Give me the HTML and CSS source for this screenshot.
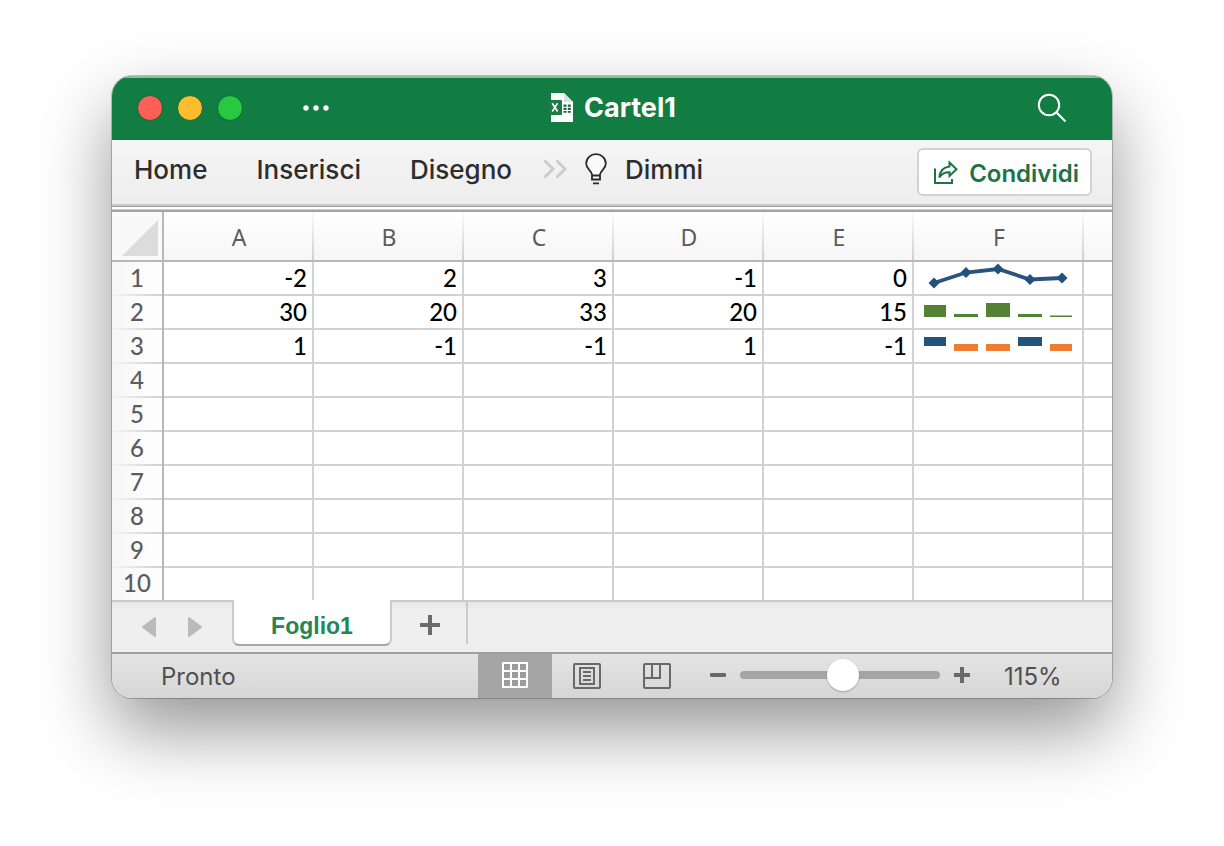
FILE: index.html
```html
<!DOCTYPE html>
<html lang="it">
<head>
<meta charset="utf-8">
<meta name="viewport" content="width=device-width, initial-scale=1">
<title>Cartel1</title>
<link rel="stylesheet" href="styles.css">
</head>
<body>
<main class="window">
  <header class="titlebar">
    <div class="titlebar-left">
      <div class="lights">
        <button class="light light-close" aria-label="Chiudi"></button>
        <button class="light light-min" aria-label="Riduci"></button>
        <button class="light light-max" aria-label="Ingrandisci"></button>
      </div>
      <button class="plain" aria-label="Altro">
        <svg width="26" height="6" viewBox="0 0 26 6" fill="#fff"><circle cx="3" cy="3" r="2.7"/><circle cx="13" cy="3" r="2.7"/><circle cx="23" cy="3" r="2.7"/></svg>
      </button>
    </div>
    <h1 class="title">
      <svg width="26" height="30" viewBox="0 0 26 30">
        <path d="M3 0H16L25 9V29H3Z" fill="#fff"/>
        <path d="M16 0V9H25Z" fill="#d6e2da"/>
        <path d="M15.500 11.500h3v2.200h-3zM19.800 11.500h3v2.200h-3zM15.500 14.800h3V17h-3zM19.800 14.800h3V17h-3zM15.500 18h3v1.800h-3zM19.800 18h3v1.800h-3z" fill="#17663a"/>
        <rect y="7" width="14" height="15" rx="1" fill="#1d7b45"/>
        <path d="M4.200 10.300 9.600 18.500M9.600 10.300 4.200 18.500" stroke="#fff" stroke-width="1.600"/>
      </svg>
      <span>Cartel1</span>
    </h1>
    <button class="plain search" aria-label="Cerca">
      <svg width="30" height="30" viewBox="0 0 30 30" fill="none" stroke="#fff" stroke-width="2"><circle cx="12" cy="12" r="10.200"/><path d="M19.300 19.300 28.500 28.500"/></svg>
    </button>
  </header>

  <nav class="ribbon" aria-label="Barra multifunzione">
    <button class="plain menu">Home</button>
    <button class="plain menu">Inserisci</button>
    <button class="plain menu">Disegno</button>
    <button class="plain more" aria-label="Altre schede">
      <svg width="24" height="20" viewBox="0 0 24 20" fill="none" stroke="#cbcbcb" stroke-width="2.800"><path d="M1.500 1.500 10 10 1.500 18.500M13.500 1.500 22 10 13.500 18.500"/></svg>
    </button>
    <button class="plain menu tell">
      <svg width="22" height="32" viewBox="0 0 22 32" fill="none" stroke="#2b2b2b" stroke-width="1.800"><path fill="#fafafa" d="M7 21.500C6.500 17.500 1.200 16 1.200 10.700C1.200 5.200 5.600 1.200 11 1.200S20.800 5.200 20.800 10.700C20.800 16 15.500 17.500 15 21.500V26.500H7Z"/><path d="M7 22.500H15M8 30.300H14"/></svg>
      <span>Dimmi</span>
    </button>
    <button class="share">
      <svg width="26" height="26" viewBox="0 0 26 26" fill="none" stroke="#1f7245" stroke-width="2"><path d="M2 8.500V23H19V19"/><path d="M16.500 2.500 23.500 9.200 16.500 16V12.200C11.500 12 8.500 13.800 6.300 17.600C6.800 11 10.300 7 16.500 6.400Z"/></svg>
      <span>Condividi</span>
    </button>
  </nav>

  <table class="sheet">
    <colgroup><col class="c-row"><col class="c-std"><col class="c-std"><col class="c-std"><col class="c-std"><col class="c-std"><col class="c-wide"><col></colgroup>
    <thead>
      <tr><th class="corner"><svg width="36" height="36" viewBox="0 0 36 36"><path d="M36 0V36H0Z" fill="#dcdcdc"/></svg></th><th>A</th><th>B</th><th>C</th><th>D</th><th>E</th><th>F</th><th></th></tr>
    </thead>
    <tbody>
      <tr><th>1</th><td>-2</td><td>2</td><td>3</td><td>-1</td><td>0</td>
        <td class="spark"><svg width="168" height="32" viewBox="0 0 168 32"><path d="M20 21 52 10.500 84 7 116 17.500 148 16" fill="none" stroke="#28547d" stroke-width="3.800"/><path d="M20 15.500l5.500 5.500-5.500 5.500-5.500-5.500zM52 5l5.500 5.500-5.500 5.500-5.500-5.500zM84 1.500l5.500 5.500-5.500 5.500-5.500-5.500zM116 12l5.500 5.500-5.500 5.500-5.500-5.500zM148 10.500l5.500 5.500-5.500 5.500-5.500-5.500z" fill="#22527c"/></svg></td><td></td></tr>
      <tr><th>2</th><td>30</td><td>20</td><td>33</td><td>20</td><td>15</td>
        <td class="spark"><svg width="168" height="32" viewBox="0 0 168 32" fill="#548235"><path d="M10 9h22v12H10zM40 18h24v3H40zM72 7h24v14H72zM104 18h24v3h-24zM136 19.500h22v1.500h-22z"/></svg></td><td></td></tr>
      <tr><th>3</th><td>1</td><td>-1</td><td>-1</td><td>1</td><td>-1</td>
        <td class="spark"><svg width="168" height="32" viewBox="0 0 168 32"><path d="M10 7h22v9H10zM104 7h24v9h-24z" fill="#23527b"/><path d="M40 14h24v7H40zM72 14h24v7H72zM136 14h22v7h-22z" fill="#ed7d31"/></svg></td><td></td></tr>
      <tr><th>4</th><td></td><td></td><td></td><td></td><td></td><td></td><td></td></tr>
      <tr><th>5</th><td></td><td></td><td></td><td></td><td></td><td></td><td></td></tr>
      <tr><th>6</th><td></td><td></td><td></td><td></td><td></td><td></td><td></td></tr>
      <tr><th>7</th><td></td><td></td><td></td><td></td><td></td><td></td><td></td></tr>
      <tr><th>8</th><td></td><td></td><td></td><td></td><td></td><td></td><td></td></tr>
      <tr><th>9</th><td></td><td></td><td></td><td></td><td></td><td></td><td></td></tr>
      <tr><th>10</th><td></td><td></td><td></td><td></td><td></td><td></td><td></td></tr>
    </tbody>
  </table>

  <div class="tabs">
    <div class="arrows">
      <button class="plain" aria-label="Foglio precedente"><svg width="16" height="22" viewBox="0 0 16 22"><path d="M14 2V20L2 11Z" fill="#bababa" stroke="#bababa" stroke-width="2" stroke-linejoin="round"/></svg></button>
      <button class="plain" aria-label="Foglio successivo"><svg width="16" height="22" viewBox="0 0 16 22"><path d="M2 2V20L14 11Z" fill="#bababa" stroke="#bababa" stroke-width="2" stroke-linejoin="round"/></svg></button>
    </div>
    <button class="tab">Foglio1</button>
    <button class="plain add" aria-label="Aggiungi foglio"><svg width="20" height="20" viewBox="0 0 20 20"><path d="M8 0h4v8h8v4h-8v8H8v-8H0V8h8z" fill="#6b6b6b"/></svg></button>
  </div>

  <footer class="status">
    <span class="ready">Pronto</span>
    <button class="plain view view-on" aria-label="Normale"><svg width="26" height="28" viewBox="0 0 26 28"><rect x="1" y="2" width="24" height="24" fill="#9c9c9c"/><path d="M1 1H25V25H1ZM9 1V25M17 1V25M1 9H25M1 17H25" fill="none" stroke="#fff" stroke-width="2" stroke-linejoin="round"/></svg></button>
    <button class="plain view" aria-label="Layout di pagina"><svg width="28" height="26" viewBox="0 0 28 26" fill="none" stroke="#696969" stroke-width="2"><rect x="1" y="1" width="26" height="24" rx="1"/><path d="M7 5H21V21H7ZM10 9H18M10 13H18M10 17H18"/></svg></button>
    <button class="plain view" aria-label="Anteprima interruzioni di pagina"><svg width="28" height="26" viewBox="0 0 28 26" fill="none" stroke="#696969" stroke-width="2"><rect x="1" y="1" width="26" height="24" rx="1"/><path d="M1 15H17V1M9 1V15"/></svg></button>
    <div class="zoom">
      <button class="plain" aria-label="Riduci zoom"><svg width="16" height="16" viewBox="0 0 16 16"><rect y="6" width="16" height="4" rx="1" fill="#696969"/></svg></button>
      <input class="slider" type="range" min="0" max="100" value="52" aria-label="Zoom">
      <button class="plain" aria-label="Aumenta zoom"><svg width="16" height="16" viewBox="0 0 16 16"><path d="M6 0h4v6h6v4h-6v6H6v-6H0V6h6z" fill="#696969"/></svg></button>
    </div>
    <span class="percent">115%</span>
  </footer>
</main>
</body>
</html>
```
FILE: styles.css
```css
* { box-sizing: border-box; }

body {
  margin: 0;
  padding: 76px 112px 148px;
  background: #fff;
  font-family: Inter, "Liberation Sans", sans-serif;
}

svg { display: block; flex: none; }

button { font: inherit; color: inherit; cursor: pointer; }

.plain {
  display: flex;
  align-items: center;
  padding: 0;
  border: 0;
  background: none;
}

.window {
  overflow: hidden;
  border-radius: 20px;
  background: #fff;
  box-shadow: 0 0 0 1px rgba(0, 0, 0, .22), 0 32px 72px rgba(0, 0, 0, .42);
}

.titlebar {
  display: grid;
  grid-template-columns: 1fr auto 1fr;
  align-items: center;
  height: 64px;
  padding: 0 25px 2px;
  border-top: 2px solid #8fbaa1;
  background: #117d43;
}

.titlebar-left { display: flex; align-items: center; gap: 60px; }

.lights { display: flex; gap: 14px; }

.light {
  width: 26px;
  height: 26px;
  padding: 0;
  border: 1px solid #0d6937;
  border-radius: 50%;
}

.light-close { background: #ff5f57; }
.light-min { background: #febc2e; }
.light-max { background: #28c840; }

.title {
  display: flex;
  align-items: center;
  gap: 10px;
  margin: 0;
  color: #fff;
  font-size: 27px;
  font-weight: 700;
  line-height: 32px;
}

.search { justify-self: end; margin-right: 20px; }

.ribbon {
  display: flex;
  align-items: flex-start;
  height: 72px;
  padding: 8px 20px 0 22px;
  border-bottom: 2px solid #a4a4a4;
  background: linear-gradient(#f5f5f5, #ededed 64px, #c8c8c8 64px, #c8c8c8 66px, #9c9c9c 66px, #9c9c9c 67px, #fff 67px, #fff 69px, #ccc 69px);
  color: #2d2d2d;
}

.menu {
  height: 42px;
  margin-right: 49px;
  font-size: 26px;
  font-weight: 500;
}

.more { height: 42px; margin: 0 18px 0 -18px; }

.tell { gap: 18px; margin-right: 0; }

.share {
  display: flex;
  align-items: center;
  gap: 10px;
  height: 48px;
  margin-left: auto;
  padding: 2px 11px 0 14px;
  border: 2px solid #d2d2d2;
  border-radius: 6px;
  background: #fff;
  color: #1f7245;
  font-size: 24px;
  font-weight: 600;
}

.sheet {
  width: 100%;
  table-layout: fixed;
  border-collapse: separate;
  border-spacing: 0;
  font-family: Lato, "Noto Sans", sans-serif;
  font-size: 24px;
  line-height: 28px;
}

.c-row { width: 52px; }
.c-std { width: 150px; }
.c-wide { width: 170px; }

.sheet th {
  padding: 0 0 2px;
  color: #5c5c5c;
  font-weight: 500;
}

.sheet thead th {
  height: 50px;
  padding: 2px 0 0;
  border-bottom: 2px solid #b8b8b8;
  background: linear-gradient(#fbfbfb, #cfcfcf) right / 2px 100% no-repeat, linear-gradient(#fff, #f6f6f6);
  font-family: "Noto Sans", sans-serif;
  font-size: 23px;
  font-weight: 400;
}

.sheet thead th:last-child { background: linear-gradient(#fff, #f6f6f6); }

.sheet thead .corner {
  padding: 8px 4px 4px 10px;
  border-right: 2px solid #b8b8b8;
  background: #f9f9f9;
}

.sheet tbody th {
  height: 34px;
  border-right: 2px solid #b8b8b8;
  background: linear-gradient(90deg, #f5f5f5, #d0d0d0) bottom / 100% 2px no-repeat, linear-gradient(90deg, #f6f6f6, #fff);
}

.sheet td {
  height: 34px;
  padding: 0 5px 0 0;
  border-right: 2px solid #d2d2d2;
  border-bottom: 2px solid #d2d2d2;
  color: #000;
  font-weight: 500;
  text-align: right;
}

.sheet td:last-child { border-right: 0; }

.sheet td.spark { padding: 0; }

.sheet tbody tr:last-child th,
.sheet tbody tr:last-child td { height: 32px; border-bottom: 0; }

.sheet tbody tr:last-child th { background: linear-gradient(90deg, #f6f6f6, #fff); }

.tabs {
  display: flex;
  height: 52px;
  border-top: 2px solid #cbcbcb;
  background: linear-gradient(#e6e6e6, #efefef 8px);
}

.arrows {
  display: flex;
  gap: 30px;
  width: 120px;
  padding-left: 29px;
}

.tab {
  width: 160px;
  height: 46px;
  margin-top: -2px;
  padding: 8px 0 0;
  border: 2px solid #cbcbcb;
  border-top: 0;
  border-bottom-color: #a8a8a8;
  border-radius: 0 0 7px 7px;
  background: #fff;
  color: #258653;
  font-family: "Liberation Sans", Arial, sans-serif;
  font-size: 23px;
  font-weight: 700;
}

.add {
  justify-content: center;
  width: 76px;
  height: 42px;
  padding-top: 4px;
  padding-left: 2px;
  border-right: 2px solid #cbcbcb;
}

.status {
  display: flex;
  align-items: center;
  height: 46px;
  padding-right: 50px;
  border-top: 2px solid #a0a0a0;
  background: linear-gradient(#e4e4e4, #d6d6d6);
  color: #505050;
  font-size: 24px;
}

.ready { flex: 1; padding-left: 49px; }

.view {
  justify-content: center;
  width: 70px;
  height: 44px;
}

.view-on { width: 74px; background: #a5a5a5; }

.zoom {
  display: flex;
  align-items: center;
  gap: 14px;
  margin-left: 18px;
  padding-bottom: 2px;
}

.slider {
  appearance: none;
  width: 200px;
  height: 34px;
  margin: 0;
  background: none;
}

.slider::-webkit-slider-runnable-track {
  height: 8px;
  border-radius: 4px;
  background: #a5a5a5;
}

.slider::-webkit-slider-thumb {
  appearance: none;
  width: 32px;
  height: 32px;
  margin-top: -12px;
  border-radius: 50%;
  background: #fff;
  box-shadow: 0 1px 2px rgba(0, 0, 0, .25);
}

.percent { width: 58px; margin-left: 34px; white-space: nowrap; }
```
